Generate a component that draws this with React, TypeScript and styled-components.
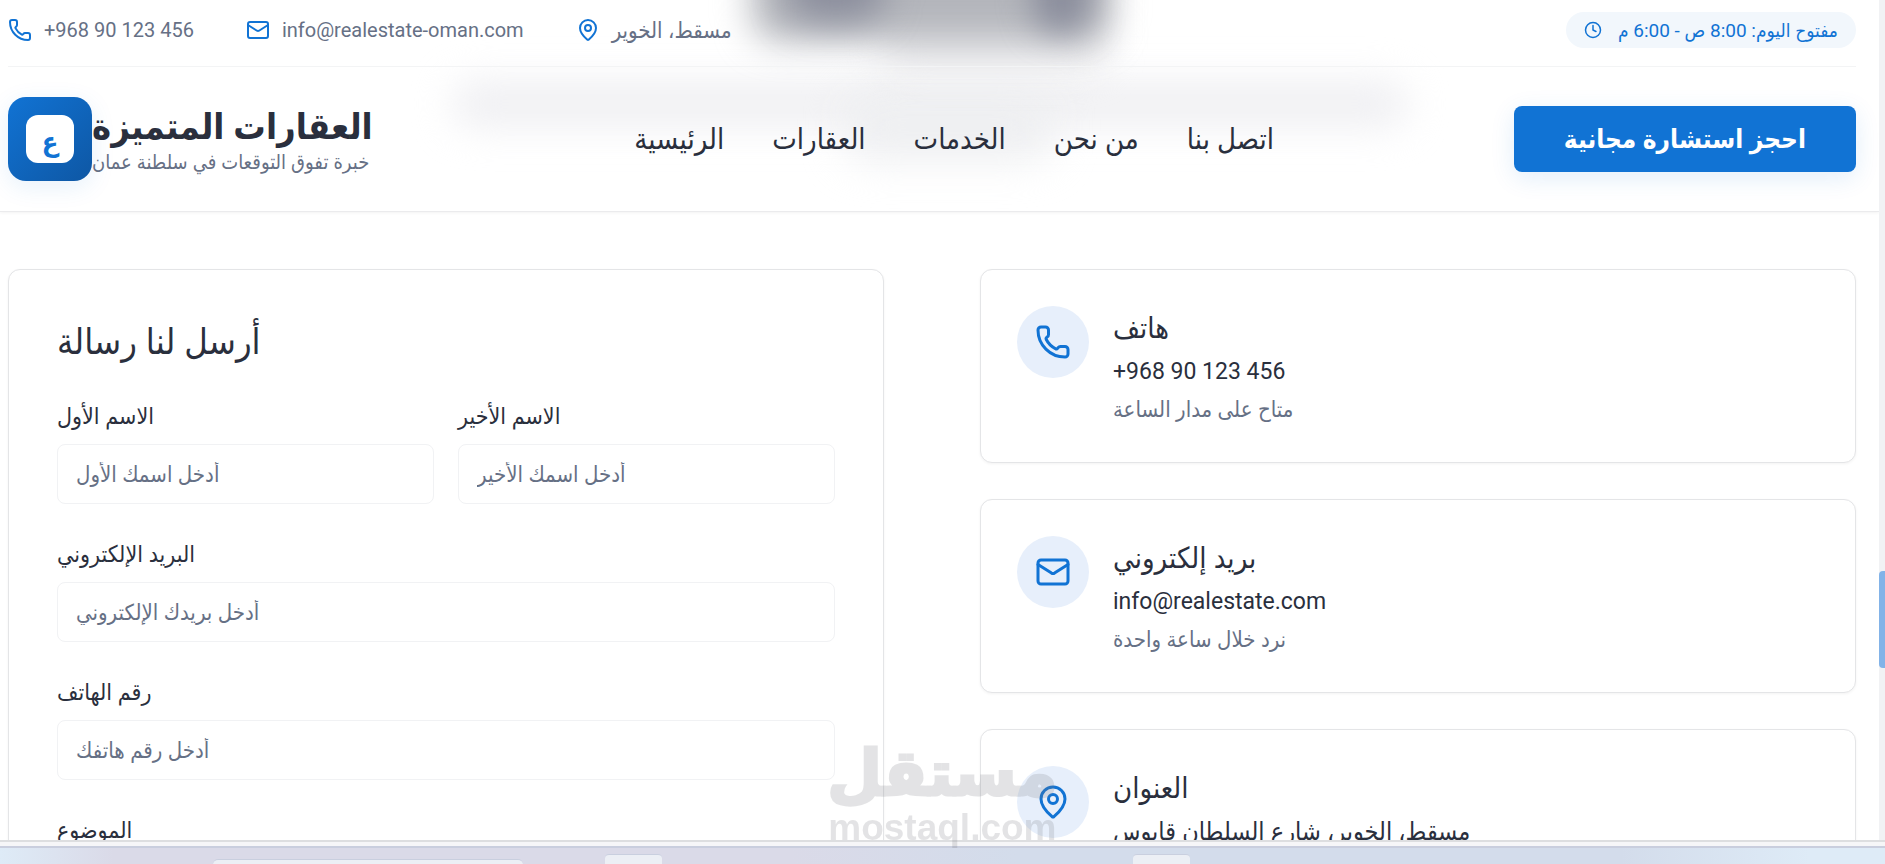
import React from "react";
import styled, { createGlobalStyle } from "styled-components";
import { Clock, Mail, MapPin, Phone } from "lucide-react";

const blue = "#1173d4";
const ink = "#2a2f3d";
const muted = "#667085";
const line = "#e4e5e7";

const Global = createGlobalStyle`
  * { box-sizing: border-box; }
  body {
    margin: 0;
    background: #fff;
    color: ${ink};
    font-family: Roboto, "DejaVu Sans Condensed", "DejaVu Sans", sans-serif;
  }
  h1, h2, h3, p { margin: 0; font-weight: 400; }
  a { color: inherit; text-decoration: none; }
`;

const Screen = styled.div`
  height: 100vh;
  display: flex;
  flex-direction: column;
  overflow: hidden;
  position: relative;
`;

const Browser = styled.div`
  flex: 1;
  min-height: 0;
  display: flex;
`;

const Page = styled.div`
  flex: 1;
  min-width: 0;
  overflow: hidden;
`;

const ScrollTrack = styled.div`
  flex: 0 0 6px;
  background: #f1f2f4;
  position: relative;
`;

const ScrollThumb = styled.div`
  position: absolute;
  left: 0;
  right: 0;
  top: 68%;
  height: 97px;
  background: #82b3e8;
  border-radius: 4px 0 0 4px;
`;

const Header = styled.header`
  position: relative;
  overflow: hidden;
  padding: 0 23px 0 8px;
  border-bottom: 1px solid #ebebed;
  box-shadow: 0 1px 3px rgba(0, 0, 0, 0.05);
`;

const Haze = styled.div<{ $left: number; $top: number; $w: number; $h: number; $tone: string; $blur: number }>`
  position: absolute;
  left: ${(p) => p.$left}%;
  top: ${(p) => p.$top}px;
  width: ${(p) => p.$w}%;
  height: ${(p) => p.$h}px;
  background: ${(p) => p.$tone};
  filter: blur(${(p) => p.$blur}px);
  border-radius: 24px;
`;

const TopBar = styled.div`
  position: relative;
  display: flex;
  align-items: center;
  justify-content: space-between;
  height: 67px;
  padding-bottom: 6px;
  border-bottom: 1px solid #f3f4f5;
`;

const Contacts = styled.address`
  display: flex;
  gap: 52px;
  font-style: normal;
`;

const Contact = styled.a<{ $size: number }>`
  display: flex;
  align-items: center;
  gap: 12px;
  height: 32px;
  font-size: ${(p) => p.$size}px;
  white-space: nowrap;
  color: ${muted};
  svg { color: ${blue}; flex: none; }
`;

const Hours = styled.div`
  display: flex;
  align-items: center;
  gap: 16px;
  height: 36px;
  padding: 0 18px;
  border-radius: 18px;
  background: #f2f7fc;
  color: ${blue};
  font-size: 19px;
  white-space: nowrap;
`;

const MainBar = styled.div`
  position: relative;
  display: flex;
  align-items: center;
  justify-content: space-between;
  height: 144px;
`;

const Brand = styled.a`
  display: flex;
  align-items: center;
  margin-right: 22px;
`;

const BrandText = styled.span`
  padding-top: 4px;
`;

const LogoTile = styled.span`
  display: grid;
  place-items: center;
  width: 84px;
  height: 84px;
  border-radius: 18px;
  background: linear-gradient(135deg, #1173d4, #0e57a4);
  box-shadow: 0 6px 24px rgba(17, 115, 212, 0.1);
`;

const LogoLetter = styled.span`
  display: grid;
  place-items: center;
  width: 48px;
  height: 48px;
  padding-top: 6px;
  border-radius: 12px;
  background: #fff;
  color: ${blue};
  font-size: 27px;
  line-height: 42px;
  font-weight: 700;
`;

const BrandName = styled.span`
  display: block;
  font-size: 36px;
  line-height: 42px;
  font-weight: 700;
  white-space: nowrap;
`;

const BrandTag = styled.span`
  display: block;
  font-size: 20px;
  line-height: 28px;
  color: ${muted};
  white-space: nowrap;
`;

const Nav = styled.nav`
  display: flex;
  gap: 48px;
  font-size: 29px;
  line-height: 40px;
  white-space: nowrap;
`;

const Cta = styled.button`
  height: 66px;
  padding: 0 50px;
  border: 0;
  border-radius: 8px;
  background: ${blue};
  color: #fff;
  font: inherit;
  font-size: 26px;
  font-weight: 700;
  white-space: nowrap;
  box-shadow: 0 6px 24px rgba(17, 115, 212, 0.12);
`;

const Content = styled.main`
  display: grid;
  grid-template-columns: 1fr 1fr;
  gap: 96px;
  align-items: start;
  padding: 57px 23px 57px 8px;
`;

const Card = styled.section<{ $pad: number }>`
  border: 1px solid ${line};
  border-radius: 12px;
  padding: ${(p) => p.$pad}px;
  background: #fff;
  box-shadow: 0 1px 3px rgba(0, 0, 0, 0.05);
`;

const FormTitle = styled.h2`
  font-size: 36px;
  line-height: 48px;
  margin-bottom: 36px;
`;

const Form = styled.form`
  display: grid;
  grid-template-columns: 1fr 1fr;
  gap: 36px 24px;
`;

const Field = styled.div<{ $wide?: boolean }>`
  display: flex;
  flex-direction: column;
  gap: 12px;
  min-width: 0;
  grid-column: ${(p) => (p.$wide ? "1 / -1" : "auto")};
`;

const Label = styled.label`
  font-size: 23px;
  line-height: 30px;
`;

const Input = styled.input`
  width: 100%;
  height: 60px;
  padding: 0 18px;
  border: 1px solid #f1f2f4;
  border-radius: 8px;
  background: #fff;
  font: inherit;
  font-size: 22px;
  color: ${ink};
  &::placeholder { color: ${muted}; opacity: 1; }
`;

const Info = styled.div`
  display: flex;
  flex-direction: column;
  gap: 36px;
`;

const InfoRow = styled.div`
  display: flex;
  align-items: flex-start;
  gap: 24px;
`;

const Disc = styled.span`
  display: grid;
  place-items: center;
  flex: none;
  width: 72px;
  height: 72px;
  border-radius: 50%;
  background: #e7effb;
  color: ${blue};
`;

const InfoTitle = styled.h3`
  font-size: 29px;
  line-height: 44px;
`;

const InfoValue = styled.p<{ $size: number }>`
  font-size: ${(p) => p.$size}px;
  line-height: 44px;
`;

const InfoNote = styled.p`
  font-size: 22px;
  line-height: 32px;
  color: ${muted};
`;

const Taskbar = styled.footer`
  flex: 0 0 24px;
  display: flex;
  flex-direction: column;
  background: linear-gradient(90deg, #deebf7 0, #dadae8 6%, #dadae8 42%, #d3dceb 54%, #d3dceb 86%, #deebf7 96%);
`;

const WindowEdge = styled.div`
  height: 8px;
  border-top: 2px solid #dddee0;
  border-bottom: 2px solid #c9cede;
  background: #f6f6f8;
`;

const Dock = styled.div`
  flex: 1;
  display: grid;
  grid-template-columns: 213fr 310fr 82fr 57fr 471fr 57fr 695fr;
  align-items: end;
`;

const DockItem = styled.div<{ $col: number; $h: number; $round: number }>`
  grid-column: ${(p) => p.$col};
  height: ${(p) => p.$h}px;
  border-top: 1px solid #c9cfdf;
  border-radius: ${(p) => p.$round}px ${(p) => p.$round}px 0 0;
  background: #eceff5;
`;

const Watermark = styled.div`
  position: absolute;
  left: 44%;
  bottom: 18px;
  width: 226px;
  display: flex;
  flex-direction: column;
  align-items: center;
  color: #787a80;
  opacity: 0.2;
  font-weight: 700;
  white-space: nowrap;
  pointer-events: none;
`;

const MarkArabic = styled.span`
  font-family: "DejaVu Sans", sans-serif;
  font-size: 63px;
  line-height: 72px;
  -webkit-text-stroke: 3px #787a80;
`;

const MarkLatin = styled.span`
  font-family: "Liberation Sans", sans-serif;
  font-size: 37px;
  line-height: 36px;
`;

const fields = [
  { id: "first", label: "الاسم الأول", hint: "أدخل اسمك الأول" },
  { id: "last", label: "الاسم الأخير", hint: "أدخل اسمك الأخير" },
  { id: "email", label: "البريد الإلكتروني", hint: "أدخل بريدك الإلكتروني", wide: true },
  { id: "phone", label: "رقم الهاتف", hint: "أدخل رقم هاتفك", wide: true },
  { id: "subject", label: "الموضوع", hint: "", wide: true },
];

const infos = [
  { icon: Phone, title: "هاتف", value: "+968 90 123 456", size: 23, note: "متاح على مدار الساعة" },
  { icon: Mail, title: "بريد إلكتروني", value: "info@realestate.com", size: 23, note: "نرد خلال ساعة واحدة" },
  { icon: MapPin, title: "العنوان", value: "مسقط، الخوير، شارع السلطان قابوس", size: 25, note: "" },
];

const links = ["الرئيسية", "العقارات", "الخدمات", "من نحن", "اتصل بنا"];

export default function App() {
  return (
    <Screen>
      <Global />
      <Browser>
        <Page>
          <Header>
            <Haze $left={24} $top={80} $w={51} $h={48} $tone="#f0f0f3" $blur={18} />
            <Haze $left={45} $top={90} $w={11} $h={70} $tone="#eeeff1" $blur={20} />
            <Haze $left={47} $top={-60} $w={12} $h={132} $tone="#ececee" $blur={16} />
            <Haze $left={40} $top={-80} $w={19} $h={120} $tone="#b3b5bb" $blur={18} />
            <Haze $left={42} $top={-80} $w={5} $h={100} $tone="#8a8d9c" $blur={18} />
            <Haze $left={55} $top={-80} $w={3} $h={112} $tone="#8a8d9c" $blur={16} />
            <TopBar>
              <Contacts>
                <Contact href="tel:+96890123456" $size={20}>
                  <Phone size={24} />
                  +968 90 123 456
                </Contact>
                <Contact href="mailto:info@realestate-oman.com" $size={20}>
                  <Mail size={24} />
                  info@realestate-oman.com
                </Contact>
                <Contact href="#map" $size={22}>
                  <MapPin size={24} />
                  مسقط، الخوير
                </Contact>
              </Contacts>
              <Hours>
                <Clock size={18} />
                <span dir="rtl">مفتوح اليوم: 8:00 ص - 6:00 م</span>
              </Hours>
            </TopBar>
            <MainBar>
              <Brand href="#home">
                <LogoTile>
                  <LogoLetter>ع</LogoLetter>
                </LogoTile>
                <BrandText>
                  <BrandName>العقارات المتميزة</BrandName>
                  <BrandTag>خبرة تفوق التوقعات في سلطنة عمان</BrandTag>
                </BrandText>
              </Brand>
              <Nav>
                {links.map((l) => (
                  <a key={l} href="#nav">{l}</a>
                ))}
              </Nav>
              <Cta type="button">احجز استشارة مجانية</Cta>
            </MainBar>
          </Header>
          <Content>
            <Card $pad={48}>
              <FormTitle>أرسل لنا رسالة</FormTitle>
              <Form>
                {fields.map((f) => (
                  <Field key={f.id} $wide={f.wide}>
                    <Label htmlFor={f.id}>{f.label}</Label>
                    <Input id={f.id} placeholder={f.hint} />
                  </Field>
                ))}
              </Form>
            </Card>
            <Info>
              {infos.map(({ icon: Icon, title, value, size, note }) => (
                <Card key={title} $pad={36}>
                  <InfoRow>
                    <Disc>
                      <Icon size={36} />
                    </Disc>
                    <div>
                      <InfoTitle>{title}</InfoTitle>
                      <InfoValue $size={size}>{value}</InfoValue>
                      <InfoNote>{note}</InfoNote>
                    </div>
                  </InfoRow>
                </Card>
              ))}
            </Info>
          </Content>
        </Page>
        <ScrollTrack>
          <ScrollThumb />
        </ScrollTrack>
      </Browser>
      <Taskbar>
        <WindowEdge />
        <Dock>
          <DockItem $col={2} $h={5} $round={12} />
          <DockItem $col={4} $h={10} $round={4} />
          <DockItem $col={6} $h={10} $round={4} />
        </Dock>
      </Taskbar>
      <Watermark>
        <MarkArabic>مستقل</MarkArabic>
        <MarkLatin>mostaql.com</MarkLatin>
      </Watermark>
    </Screen>
  );
}
